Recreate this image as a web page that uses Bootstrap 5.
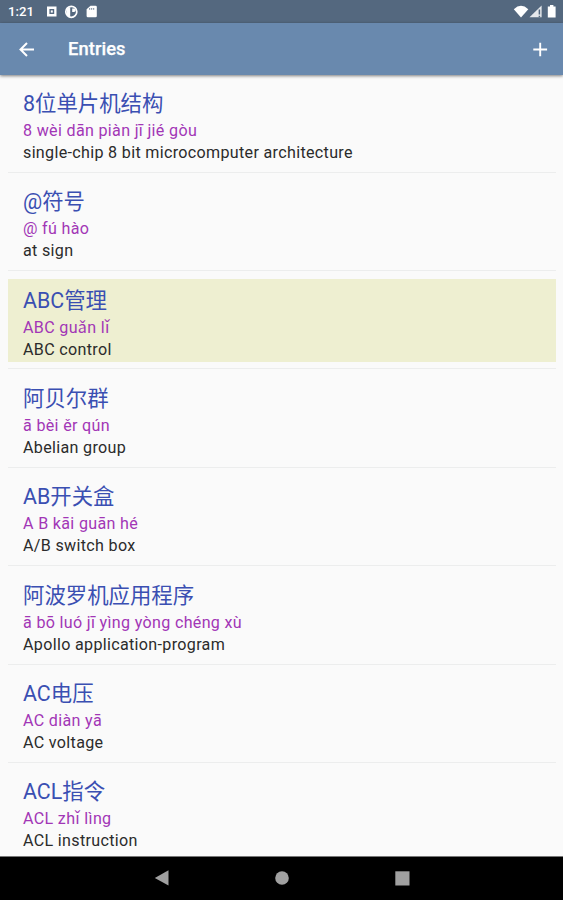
<!DOCTYPE html>
<html lang="en">
<head>
<meta charset="utf-8">
<meta name="viewport" content="width=device-width, initial-scale=1">
<title>Entries</title>
<link href="https://cdn.jsdelivr.net/npm/bootstrap@5.3.0/dist/css/bootstrap.min.css" rel="stylesheet">
<style>
  body { font-family: Roboto, "Noto Sans CJK SC", sans-serif; background: #fafafa; }
  svg { display: block; flex: none; }
  .status-strip { height: 23px; background: #54687f; font-size: 13.2px; font-weight: 500; padding: 1px 6px 0 8px; }
  .status-notes { margin-left: 10px; }
  .top-area { z-index: 2; }
  .app-bar { height: 52px; background: #6989ae; padding: 1px 14px 0 18px; box-shadow: 0 1px 3px rgba(0,0,0,.5); }
  .app-title { font-size: 18.3px; font-weight: 500; line-height: 1; margin-left: 32px; letter-spacing: .1px; -webkit-text-stroke: .25px #fff; }
  .entry-list { padding: 0 7px 0 8px; margin-top: -.6px; min-height: 0; }
  .entry { height: 98.37px; padding: 7.5px 0; border-bottom: 1.5px solid #eceded; flex: none; }
  .entry-body { height: 83px; padding: 8px 15px 0; white-space: nowrap; }
  .entry-body.chosen { background: #eeefd1; }
  .hanzi { font-size: 21.4px; line-height: 28px; color: #3a4fb2; }
  .pinyin, .gloss { font-size: 16.1px; line-height: 22px; letter-spacing: .32px; }
  .pinyin { margin-top: 2px; color: #a236b6; }
  .gloss { color: #2b2b2b; }
  .nav-strip { height: 44px; background: #000; border-top: 1px solid #777; padding: 0 0 1px 154px; gap: 106px; }
</style>
<script src="https://cdn.jsdelivr.net/npm/bootstrap@5.3.0/dist/js/bootstrap.bundle.min.js"></script>
</head>
<body class="vh-100 overflow-hidden d-flex flex-column">
<header class="top-area flex-shrink-0 position-relative text-white">
  <div class="status-strip d-flex align-items-center">
    <span>1:21</span>
    <svg class="status-notes me-auto" width="54" height="16" viewBox="0 0 54 16"><path fill="#fff" fill-rule="evenodd" d="M3 2.5h9.5v10H3zM5.4 5v5h4.8V5z"/><path d="M6.8 6.4h2v2.2h-2z" fill="#fff"/><circle cx="27.3" cy="7.8" r="5.5" fill="none" stroke="#fff" stroke-width="1.7"/><path d="M22.7 4.5l3.5-1.5v9l-1.5.8-2-2z" fill="#fff"/><path d="M28.2 4.6h1.8a1.6 1.6 0 0 1 0 3.4h-1.8z" fill="#fff"/><path d="M46.5 1.8h5q1.3 0 1.3 1.3v9q0 1.2-1.3 1.2h-7.6q-1.3 0-1.3-1.2V5.2z" fill="#fff"/><path d="M45.7 4v1.8M47.7 4v1.8M49.7 4v1.8" stroke="#54687f" stroke-width=".8"/></svg>
    <svg width="44" height="16" viewBox="0 0 44 16" fill="#fff"><path d="M.8 5.2Q8-1.5 15.3 5.2L8 13.5z"/><path d="M28.6 1.5v11.8H16.5z" fill-opacity=".85"/><path d="M26.4 5.5v5M26.4 11.8v1.5" stroke="#54687f" stroke-width="1.5"/><path d="M34.8 2.4h2.2V1h3.4v1.4h2.2v11h-7.8z"/></svg>
  </div>
  <div class="app-bar d-flex align-items-center">
    <svg width="18" height="18" viewBox="0 0 18 18" fill="none" stroke="#fff" stroke-width="2"><path d="M16 8.5H3M9 2L2.5 8.5 9 15"/></svg>
    <span class="app-title">Entries</span>
    <svg class="ms-auto" width="18" height="18" viewBox="0 0 18 18" fill="none" stroke="#fff" stroke-width="1.9"><path d="M2.3 8.5h13.8M9.2 1.7v13.6"/></svg>
  </div>
</header>
<main class="entry-list flex-grow-1 overflow-hidden d-flex flex-column">
  <article class="entry"><div class="entry-body"><div class="hanzi">8位单片机结构</div><div class="pinyin">8 wèi dān piàn jī jié gòu</div><div class="gloss">single-chip 8 bit microcomputer architecture</div></div></article>
  <article class="entry"><div class="entry-body"><div class="hanzi">@符号</div><div class="pinyin">@ fú hào</div><div class="gloss">at sign</div></div></article>
  <article class="entry"><div class="entry-body chosen"><div class="hanzi">ABC管理</div><div class="pinyin">ABC guǎn lǐ</div><div class="gloss">ABC control</div></div></article>
  <article class="entry"><div class="entry-body"><div class="hanzi">阿贝尔群</div><div class="pinyin">ā bèi ěr qún</div><div class="gloss">Abelian group</div></div></article>
  <article class="entry"><div class="entry-body"><div class="hanzi">AB开关盒</div><div class="pinyin">A B kāi guān hé</div><div class="gloss">A/B switch box</div></div></article>
  <article class="entry"><div class="entry-body"><div class="hanzi">阿波罗机应用程序</div><div class="pinyin">ā bō luó jī yìng yòng chéng xù</div><div class="gloss">Apollo application-program</div></div></article>
  <article class="entry"><div class="entry-body"><div class="hanzi">AC电压</div><div class="pinyin">AC diàn yā</div><div class="gloss">AC voltage</div></div></article>
  <article class="entry"><div class="entry-body"><div class="hanzi">ACL指令</div><div class="pinyin">ACL zhǐ lìng</div><div class="gloss">ACL instruction</div></div></article>
</main>
<footer class="nav-strip flex-shrink-0 d-flex align-items-center">
  <svg width="15" height="16" viewBox="0 0 15 16"><path d="M14.5.2v15.4L.8 7.9z" fill="#a0a0a0"/></svg>
  <svg width="14" height="14" viewBox="0 0 14 14"><circle cx="7" cy="7" r="6.8" fill="#a0a0a0"/></svg>
  <svg width="15" height="15" viewBox="0 0 15 15"><path d="M.3.3h14.2v14.2H.3z" fill="#a0a0a0"/></svg>
</footer>
</body>
</html>
